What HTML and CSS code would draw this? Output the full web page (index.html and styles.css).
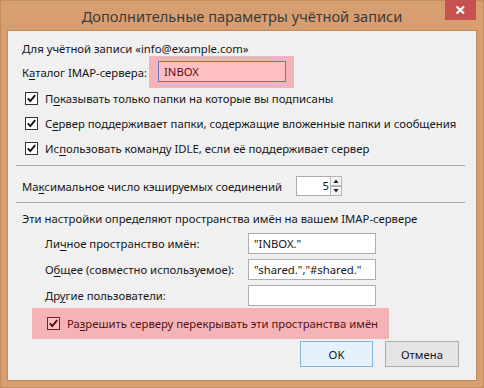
FILE: index.html
```html
<!DOCTYPE html>
<html lang="ru">
<head>
<meta charset="utf-8">
<title>Дополнительные параметры учётной записи</title>
<link rel="stylesheet" href="styles.css">
</head>
<body>
<div class="window">
  <div class="titlebar">
    <div class="title">Дополнительные параметры учётной записи</div>
    <div class="close"><svg width="31" height="20" viewBox="0 0 31 20"><path d="M11.5 6.5 L19 13.5 M19 6.5 L11.5 13.5" stroke="#fff" stroke-width="2.2"/></svg></div>
  </div>
  <div class="client">
    <div class="acct">Для учётной записи «info@example.com»</div>
    <div class="catalog">
      <div class="lbl-cat">К<u>а</u>талог IMAP-сервера:</div>
      <div class="hl hl-cat">
        <div class="field focused">INBOX</div>
      </div>
    </div>
    <div class="checks">
      <div class="chk"><svg class="cb" width="13" height="13" viewBox="0 0 13 13"><rect x=".5" y=".5" width="12" height="12" fill="#fff" stroke="#333"/><path d="M2.8 6.3 L5.3 9 L10.2 3.2" fill="none" stroke="#111" stroke-width="1.9"/></svg><span>П<u>о</u>казывать только папки на которые вы подписаны</span></div>
      <div class="chk"><svg class="cb" width="13" height="13" viewBox="0 0 13 13"><rect x=".5" y=".5" width="12" height="12" fill="#fff" stroke="#333"/><path d="M2.8 6.3 L5.3 9 L10.2 3.2" fill="none" stroke="#111" stroke-width="1.9"/></svg><span>С<u>е</u>рвер поддерживает папки, содержащие вложенные папки и сообщения</span></div>
      <div class="chk"><svg class="cb" width="13" height="13" viewBox="0 0 13 13"><rect x=".5" y=".5" width="12" height="12" fill="#fff" stroke="#333"/><path d="M2.8 6.3 L5.3 9 L10.2 3.2" fill="none" stroke="#111" stroke-width="1.9"/></svg><span>Ис<u>п</u>ользовать команду IDLE, если её поддерживает сервер</span></div>
    </div>
    <div class="sep sep1"></div>
    <div class="maxrow">
      <div class="lbl-max">Ма<u>к</u>симальное число кэшируемых соединений</div>
      <div class="spin">
        <div class="spin-field">5</div>
        <div class="spin-btns">
          <svg width="13" height="20" viewBox="0 0 13 20"><rect x=".5" y=".5" width="11" height="9" fill="#f4f4f4" stroke="#b5b5b5"/><path d="M3.5 7 L6 3.5 L8.5 7 Z" fill="#222"/><rect x=".5" y="10.5" width="11" height="9" fill="#f4f4f4" stroke="#b5b5b5"/><path d="M3.5 13 L6 16.5 L8.5 13 Z" fill="#222"/></svg>
        </div>
      </div>
    </div>
    <div class="sep sep2"></div>
    <div class="ns-title">Эти настройки определяют пространства имён на вашем IMAP-сервере</div>
    <div class="ns">
      <div class="ns-row"><div class="ns-lbl">Ли<u>ч</u>ное пространство имён:</div><div class="field">"INBOX."</div></div>
      <div class="ns-row"><div class="ns-lbl">О<u>б</u>щее (совместно используемое):</div><div class="field">"shared.","#shared."</div></div>
      <div class="ns-row"><div class="ns-lbl">Др<u>у</u>гие пользователи:</div><div class="field"></div></div>
    </div>
    <div class="hl hl-override">
      <svg class="cb" width="13" height="13" viewBox="0 0 13 13"><rect x=".5" y=".5" width="12" height="12" fill="#fff" stroke="#333"/><path d="M2.8 6.3 L5.3 9 L10.2 3.2" fill="none" stroke="#111" stroke-width="1.9"/></svg>
      <span>Ра<u>з</u>решить серверу перекрывать эти пространства имён</span>
    </div>
    <div class="buttons">
      <div class="btn btn-ok">OK</div>
      <div class="btn btn-cancel">Отмена</div>
    </div>
  </div>
</div>
</body>
</html>
```

FILE: styles.css
```css
html, body {
  margin: 0;
  padding: 0;
}
body {
  width: 484px;
  height: 388px;
  font-family: "Noto Sans", "Open Sans", sans-serif;
  font-size: 11.3px;
  color: #161616;
  overflow: hidden;
}
u {
  text-decoration-thickness: 1px;
  text-underline-offset: 2px;
}
.window {
  width: 484px;
  height: 388px;
  box-sizing: border-box;
  background: #d79f71;
  box-shadow: inset 0 0 0 1px #c38d60;
  padding: 0 8px;
  display: flex;
  flex-direction: column;
}
.titlebar {
  height: 31px;
  margin: 0 -8px;
  padding: 0 8px;
  display: grid;
  grid-template-columns: 1fr auto 1fr;
  align-items: center;
}
.title {
  grid-column: 2;
  font-size: 14.6px;
  color: #3b3b3b;
  white-space: nowrap;
}
.close {
  grid-column: 3;
  justify-self: end;
  align-self: start;
  width: 31px;
  height: 20px;
  background: #c75050;
}
.close svg {
  display: block;
}
.client {
  height: 349px;
  box-sizing: border-box;
  background: #f0f0f0;
  box-shadow: 0 0 0 1px #bc8c63;
  padding: 10px 10px 0 14px;
  display: flex;
  flex-direction: column;
}
.acct {
  height: 15px;
  line-height: 15px;
  white-space: nowrap;
}
.catalog {
  height: 32px;
  display: flex;
  align-items: center;
}
.lbl-cat {
  width: 127px;
  white-space: nowrap;
}
.hl {
  position: relative;
  box-sizing: border-box;
}
.hl::after {
  content: "";
  position: absolute;
  inset: 0;
  background: rgba(255, 0, 12, 0.25);
  pointer-events: none;
}
.hl-cat {
  width: 145px;
  height: 32px;
  padding: 5px 0 0 9px;
}
.field {
  width: 128px;
  height: 21px;
  box-sizing: border-box;
  border: 1px solid #abadb3;
  background: #fff;
  padding-left: 5px;
  line-height: 19px;
  white-space: nowrap;
}
.field.focused {
  border-color: #3399ff;
}
.checks {
  margin-top: -2px;
  display: flex;
  flex-direction: column;
}
.chk {
  height: 25px;
  display: flex;
  align-items: center;
  gap: 7px;
  padding-left: 3px;
  white-space: nowrap;
}
.cb {
  display: block;
  flex: none;
}
.sep {
  height: 1px;
  background: #a9a9a9;
  margin-left: -6px;
  margin-right: 1px;
}
.sep1 {
  margin-top: 4px;
}
.maxrow {
  margin-top: 10px;
  height: 20px;
  display: flex;
  align-items: center;
}
.lbl-max {
  width: 274px;
  white-space: nowrap;
}
.spin {
  display: flex;
}
.spin-field {
  width: 34px;
  height: 20px;
  box-sizing: border-box;
  border: 1px solid #abadb3;
  border-right: none;
  background: #fff;
  text-align: right;
  line-height: 18px;
  padding-right: 1px;
}
.spin-btns svg {
  display: block;
}
.sep2 {
  margin-top: 6px;
}
.ns-title {
  margin-top: 8px;
  height: 16px;
  line-height: 16px;
  white-space: nowrap;
}
.ns {
  margin-top: 6px;
  display: flex;
  flex-direction: column;
  gap: 5px;
  padding-left: 23px;
}
.ns-row {
  height: 21px;
  display: flex;
  align-items: center;
}
.ns-lbl {
  width: 203px;
  white-space: nowrap;
}
.hl-override {
  margin-top: 2px;
  margin-left: 10px;
  width: 357px;
  height: 31px;
  padding-left: 15px;
  display: flex;
  align-items: center;
  gap: 7px;
  white-space: nowrap;
}
.buttons {
  margin-top: 2px;
  display: flex;
  justify-content: flex-end;
  gap: 12px;
  margin-right: 7px;
}
.btn {
  height: 26px;
  box-sizing: border-box;
  display: flex;
  align-items: center;
  justify-content: center;
}
.btn-ok {
  width: 73px;
  background: #e5f1fb;
  border: 1px solid #7eb4ea;
}
.btn-cancel {
  width: 74px;
  background: #e5e5e5;
  border: 1px solid #acacac;
}
```
